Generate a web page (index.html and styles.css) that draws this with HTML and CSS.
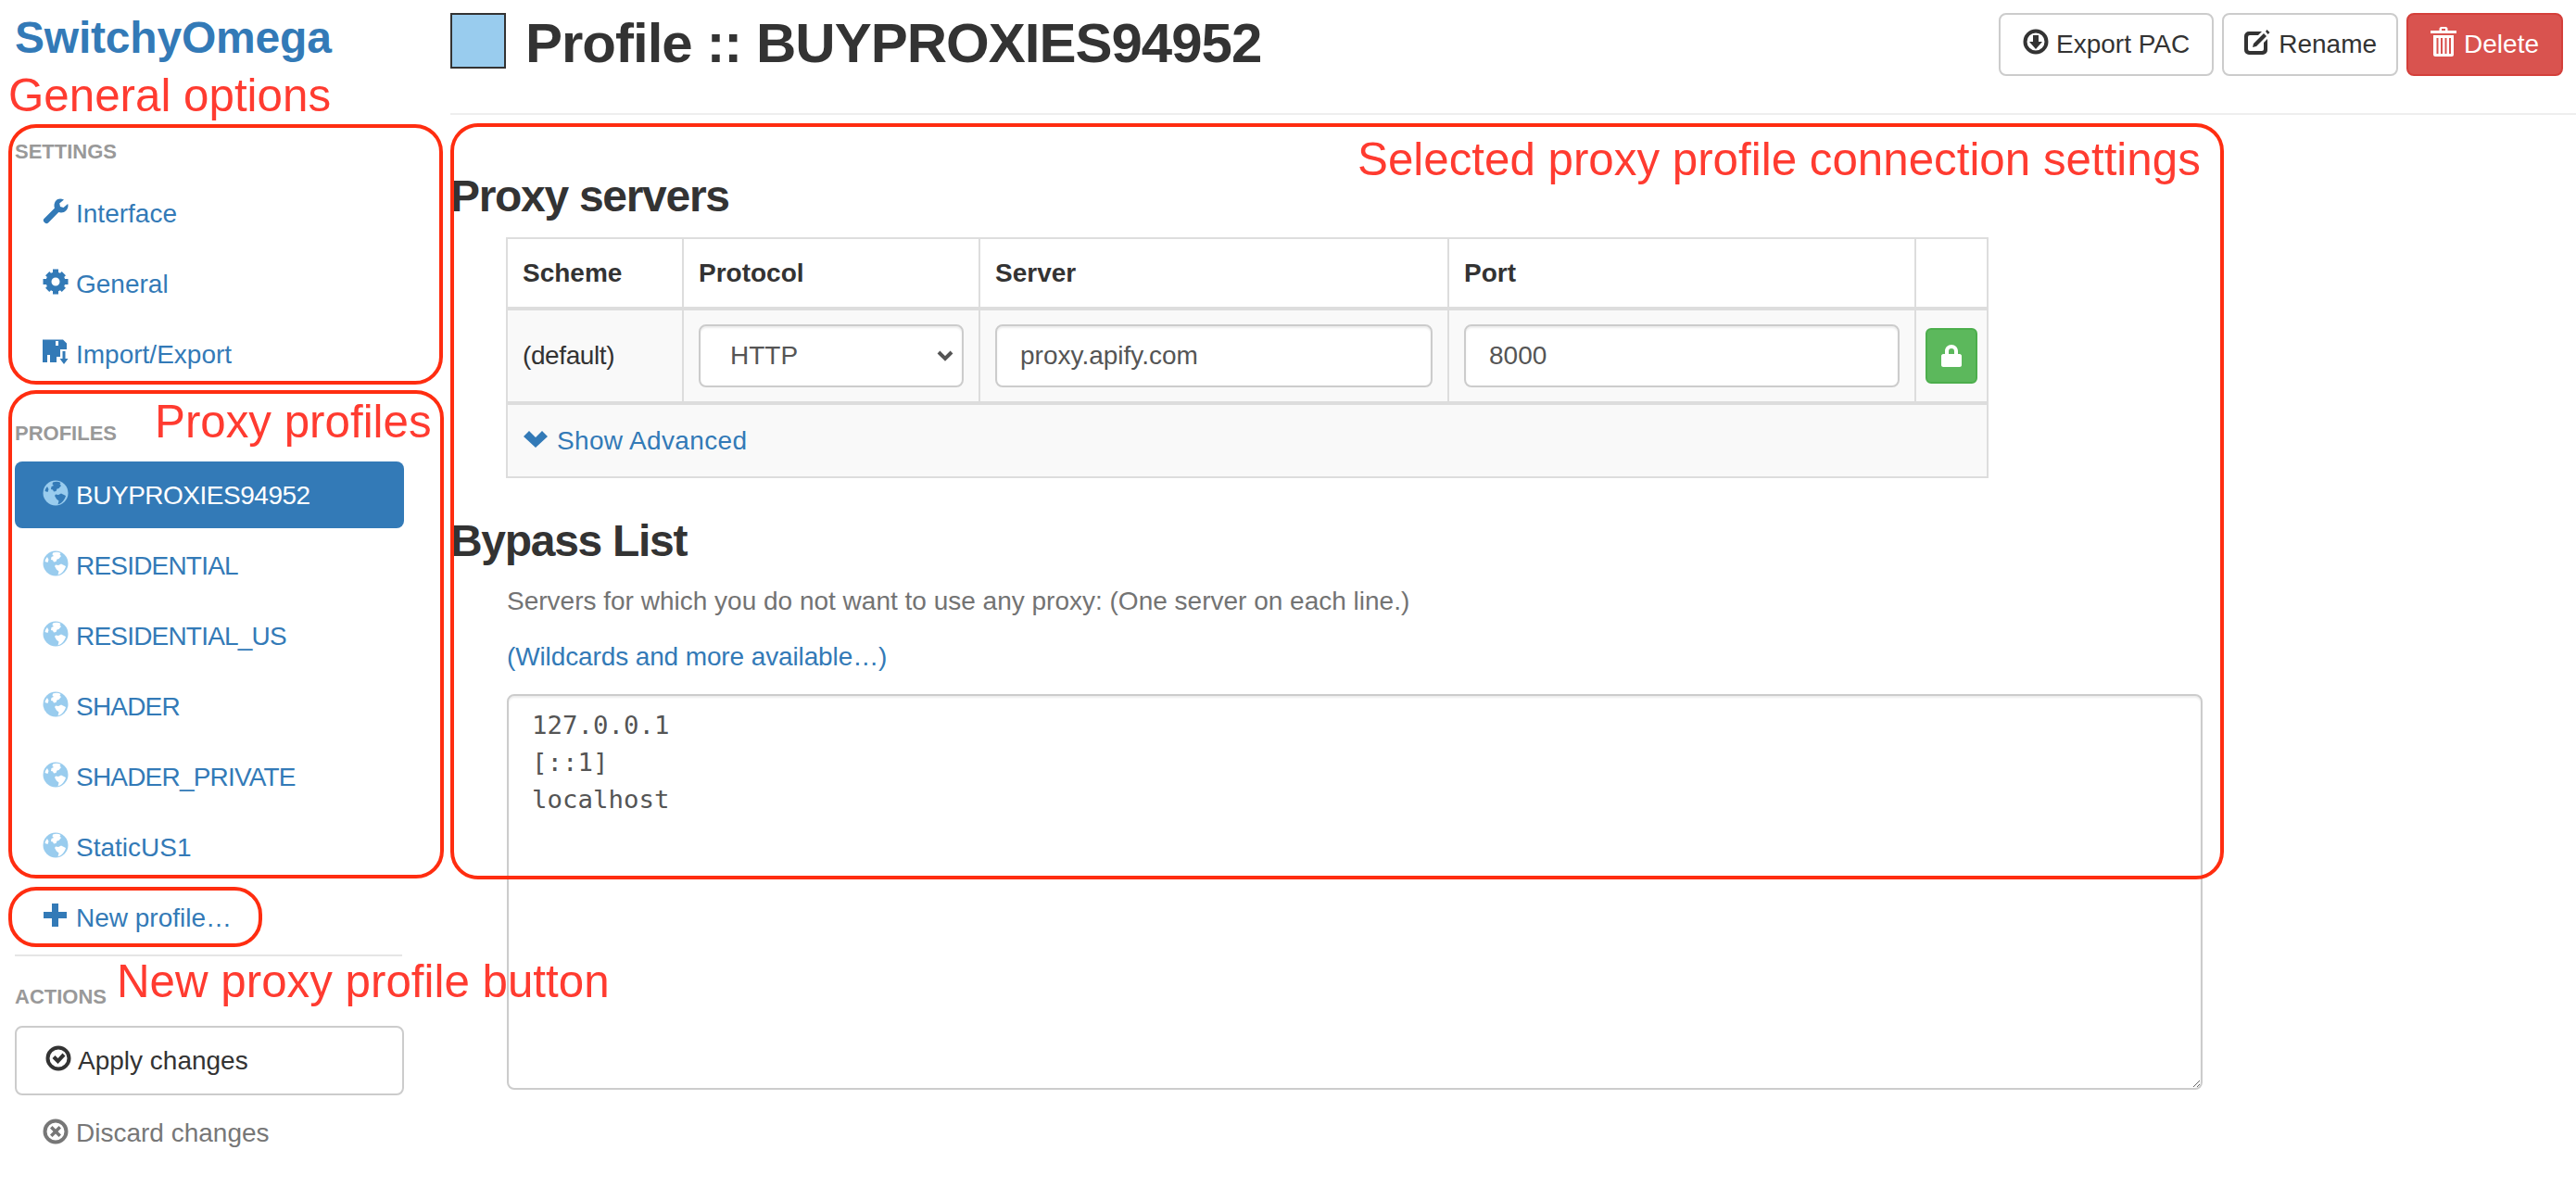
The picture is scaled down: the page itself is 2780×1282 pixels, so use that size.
FILE: index.html
```html
<!DOCTYPE html>
<html lang="en">
<head>
    <meta charset="UTF-8">
    <title>SwitchyOmega Options</title>
    <link rel="stylesheet" href="styles.css">
</head>
<body>
    <svg class="sprite" xmlns="http://www.w3.org/2000/svg">
        <symbol id="i-wrench" viewBox="0 0 28 28"><path d="M19 0.5C15 0.5 12.5 4 12.5 8c0 1 .2 2 .5 2.6L1.5 22c-1 1-1 2.5 0 3.5l1 1c1 1 2.5 1 3.5 0L17.3 15c.8.3 1.7.5 2.7.5 4 0 7.5-3.5 7.5-7.5 0-.8-.1-1.5-.3-2L22.5 10l-3.5-1-.8-3.5L23 1.500C21.500.800 20.300.500 19 .500z"/></symbol>
        <symbol id="i-cog" viewBox="0 0 28 28"><circle cx="14" cy="14" r="7.500" fill="none" stroke="currentColor" stroke-width="6"/><g fill="currentColor"><rect x="11" y="0.500" width="6" height="6"/><rect x="11" y="21.500" width="6" height="6"/><rect x="0.500" y="11" width="6" height="6"/><rect x="21.500" y="11" width="6" height="6"/><rect x="11" y="1.500" width="6" height="6" transform="rotate(45 14 14)"/><rect x="11" y="1.500" width="6" height="6" transform="rotate(135 14 14)"/><rect x="11" y="1.500" width="6" height="6" transform="rotate(225 14 14)"/><rect x="11" y="1.500" width="6" height="6" transform="rotate(315 14 14)"/></g></symbol>
        <symbol id="i-save" viewBox="0 0 28 28"><path fill-rule="evenodd" d="M0 .5h22l4 4V11h-7v8h-4v6H0zM14 2v5h3V2zM5 17v8h3v-8z"/><path d="M21.500 13h3v8h3l-4.500 6-4.500-6h3z"/></symbol>
        <symbol id="i-globe" viewBox="0 0 28 28"><circle cx="14" cy="14" r="13.500" fill="#99ccee"/><path fill="currentColor" d="M11 2.500c3-1 6-1 8.500.5l-1 1.500 1.500 1.500-2.500 3-2 .5-1 2.500-2.500.5-1-2-2-.5.5-3 2.500-1-1.500-1.500zM14 15.500l3 .5 3-1.500 5 2.500c-1 4-4 8-8.500 9.500l1-4-2.500-2-2-3.500zM5 7l1.500 3-1 3-3-1c.3-2 1.200-3.500 2.500-5z"/></symbol>
        <symbol id="i-plus" viewBox="0 0 28 28"><path d="M10 1h7v9h9v7h-9v9h-7v-9H1v-7h9z"/></symbol>
        <symbol id="i-ok" viewBox="0 0 28 28"><circle cx="14" cy="14" r="11.500" fill="none" stroke="currentColor" stroke-width="4"/><path d="M7.500 14l3-3 3 3 5-5.500 3 3-8 8.500z"/></symbol>
        <symbol id="i-remove" viewBox="0 0 28 28"><circle cx="14" cy="14" r="11.500" fill="none" stroke="currentColor" stroke-width="4"/><path d="M10.500 8L14 11.500 17.500 8 20 10.500 16.500 14 20 17.500 17.500 20 14 16.500 10.500 20 8 17.500 11.500 14 8 10.500z"/></symbol>
        <symbol id="i-download" viewBox="0 0 28 28"><circle cx="14" cy="14" r="11.500" fill="none" stroke="currentColor" stroke-width="4"/><path d="M11 7h6v7h4l-7 8-7-8h4z"/></symbol>
        <symbol id="i-edit" viewBox="0 0 30 30"><path d="M6 4h14l-4 4H7a2 2 0 0 0-2 2v13a2 2 0 0 0 2 2h13a2 2 0 0 0 2-2v-7l4-4v12a5 5 0 0 1-5 5H6a5 5 0 0 1-5-5V9a5 5 0 0 1 5-5z"/><path d="M22 6l3 3-11 11-4 1 1-4zM24 4l1.500-2 3 3-2 2z"/></symbol>
        <symbol id="i-trash" viewBox="0 0 28 32"><path fill-rule="evenodd" d="M9.500 2c0-1 1-2 2-2h5c1 0 2 1 2 2v2H28v3H0V4h9.500zM12 2v2h4V2zM3 9h22v21c0 1-1 2-2 2H5c-1 0-2-1-2-2zM6.500 12v17h2V12zM11 12v17h2V12zM15.500 12v17h2V12zM20 12v17h2V12z"/></symbol>
        <symbol id="i-lock" viewBox="0 0 22 24"><path fill-rule="evenodd" d="M4 10V7c0-4 3-7 7-7s7 3 7 7v3h2c1 0 2 1 2 2v10c0 1-1 2-2 2H2c-1 0-2-1-2-2V12c0-1 1-2 2-2zM8 10h6V7c0-2-1-3-3-3S8 5 8 7z"/></symbol>
        <symbol id="i-chevron" viewBox="0 0 26 18"><path d="M0 6l6-6 7 7 7-7 6 6-13 12z"/></symbol>
    </svg>

    <div class="page">
        <aside class="sidebar">
            <h1 class="logo">SwitchyOmega</h1>

            <div class="nav-header">SETTINGS</div>
            <ul class="nav">
                <li><a href="#"><svg class="icon"><use href="#i-wrench"/></svg>Interface</a></li>
                <li><a href="#"><svg class="icon"><use href="#i-cog"/></svg>General</a></li>
                <li><a href="#"><svg class="icon"><use href="#i-save"/></svg>Import/Export</a></li>
            </ul>

            <div class="nav-header nav-header-next">PROFILES</div>
            <ul class="nav">
                <li class="active"><a href="#"><svg class="icon icon-globe"><use href="#i-globe"/></svg><span class="caps">BUYPROXIES94952</span></a></li>
                <li><a href="#"><svg class="icon icon-globe"><use href="#i-globe"/></svg><span class="caps">RESIDENTIAL</span></a></li>
                <li><a href="#"><svg class="icon icon-globe"><use href="#i-globe"/></svg><span class="caps">RESIDENTIAL_US</span></a></li>
                <li><a href="#"><svg class="icon icon-globe"><use href="#i-globe"/></svg><span class="caps">SHADER</span></a></li>
                <li><a href="#"><svg class="icon icon-globe"><use href="#i-globe"/></svg><span class="caps">SHADER_PRIVATE</span></a></li>
                <li><a href="#"><svg class="icon icon-globe"><use href="#i-globe"/></svg>StaticUS1</a></li>
                <li><a href="#"><svg class="icon"><use href="#i-plus"/></svg>New profile…</a></li>
            </ul>

            <div class="nav-divider"></div>

            <div class="nav-header nav-header-actions">ACTIONS</div>
            <button class="apply-btn" type="button"><svg class="icon"><use href="#i-ok"/></svg>Apply changes</button>
            <a class="discard-link" href="#"><svg class="icon"><use href="#i-remove"/></svg>Discard changes</a>
        </aside>

        <main class="main">
            <header class="page-header">
                <div class="profile-swatch"></div>
                <h2 class="page-title">Profile :: BUYPROXIES94952</h2>
                <div class="page-actions">
                    <button class="btn" type="button"><svg class="icon"><use href="#i-download"/></svg>Export PAC</button>
                    <button class="btn btn-rename" type="button"><svg class="icon icon-edit"><use href="#i-edit"/></svg>Rename</button>
                    <button class="btn btn-danger" type="button"><svg class="icon icon-trash"><use href="#i-trash"/></svg>Delete</button>
                </div>
            </header>

            <section class="proxy-section">
                <h3>Proxy servers</h3>
                <table class="proxy-table">
                    <colgroup>
                        <col class="col-scheme">
                        <col class="col-protocol">
                        <col class="col-server">
                        <col class="col-port">
                        <col class="col-auth">
                    </colgroup>
                    <thead>
                        <tr>
                            <th>Scheme</th>
                            <th>Protocol</th>
                            <th>Server</th>
                            <th>Port</th>
                            <th></th>
                        </tr>
                    </thead>
                    <tbody>
                        <tr class="server-row">
                            <td class="scheme-cell">(default)</td>
                            <td><select class="field field-select"><option>HTTP</option></select></td>
                            <td><input class="field" type="text" value="proxy.apify.com"></td>
                            <td><input class="field" type="text" value="8000"></td>
                            <td class="auth-cell"><button class="lock-btn" type="button"><svg class="icon-lock"><use href="#i-lock"/></svg></button></td>
                        </tr>
                        <tr class="advanced-row">
                            <td colspan="5"><a href="#"><svg class="icon-chevron"><use href="#i-chevron"/></svg>Show Advanced</a></td>
                        </tr>
                    </tbody>
                </table>
            </section>

            <section class="bypass-section">
                <h3>Bypass List</h3>
                <p class="help-text">Servers for which you do not want to use any proxy: (One server on each line.)</p>
                <p class="help-link"><a href="#">(Wildcards and more available…)</a></p>
                <textarea class="bypass-list" spellcheck="false">127.0.0.1
[::1]
localhost</textarea>
            </section>
        </main>
    </div>

    <!-- red callouts drawn on top of the screenshot -->
    <div class="callout-box box-general"></div>
    <div class="callout-box box-profiles"></div>
    <div class="callout-box box-new"></div>
    <div class="callout-box box-selected"></div>
    <span class="callout-label label-general">General options</span>
    <span class="callout-label label-profiles">Proxy profiles</span>
    <span class="callout-label label-new">New proxy profile button</span>
    <span class="callout-label label-selected">Selected proxy profile connection settings</span>
</body>
</html>
```

FILE: styles.css
```css
:root {
    --link: #337ab7;
    --text: #333333;
    --muted: #777777;
    --border: #dddddd;
    --input-border: #cccccc;
    --stripe: #f9f9f9;
    --callout: #ff2d10;
}

* {
    margin: 0;
    padding: 0;
    box-sizing: border-box;
}

html, body {
    height: 1282px;
    overflow: hidden;
}

body {
    position: relative;
    background-color: #ffffff;
    color: var(--text);
    font-family: "Liberation Sans", Arial, sans-serif;
    font-size: 28px;
    line-height: 40px;
}

a {
    color: var(--link);
    text-decoration: none;
}

.sprite {
    display: none;
}

.icon {
    width: 28px;
    height: 28px;
    fill: currentColor;
    flex: none;
    margin-top: -6px;
}

.page {
    display: flex;
}

/* sidebar */
.sidebar {
    width: 486px;
    flex: none;
    padding-left: 16px;
    padding-right: 50px;
}

.logo {
    margin-top: 17px;
    margin-bottom: 83px;
    font-size: 48px;
    line-height: 48px;
    font-weight: 700;
    color: var(--link);
    letter-spacing: -0.2px;
}

.nav-header {
    height: 32px;
    margin-bottom: 14px;
    font-size: 22px;
    line-height: 32px;
    font-weight: 700;
    color: #999999;
}

.nav-header-next {
    margin-top: 34px;
}

.nav-header-actions {
    margin-top: 28px;
    margin-bottom: 15px;
}

.nav {
    list-style: none;
    display: flex;
    flex-direction: column;
    gap: 4px;
}

.nav a {
    display: flex;
    align-items: center;
    gap: 8px;
    height: 72px;
    padding-top: 2px;
    padding-left: 30px;
    border-radius: 8px;
}

.caps {
    letter-spacing: -0.8px;
}

.nav .active a {
    background-color: var(--link);
    color: #ffffff;
}

.nav .active .caps {
    letter-spacing: -0.48px;
}

.icon-globe {
    color: #ffffff;
}

.nav .active .icon-globe {
    color: var(--link);
}

.nav-divider {
    height: 2px;
    margin-top: 4px;
    margin-right: 2px;
    background-color: #e5e5e5;
}

.apply-btn {
    display: flex;
    align-items: center;
    gap: 7px;
    width: 100%;
    height: 75px;
    padding-left: 31px;
    background-color: #ffffff;
    border: 2px solid var(--input-border);
    border-radius: 8px;
    color: var(--text);
    font: inherit;
}

.discard-link {
    display: flex;
    align-items: center;
    gap: 8px;
    height: 72px;
    margin-top: 5px;
    padding-left: 30px;
    color: var(--muted);
}

.discard-link .icon {
    margin-top: -4px;
}

/* main column */
.main {
    flex: 1;
    min-width: 0;
}

.page-header {
    display: flex;
    align-items: flex-start;
    height: 124px;
    border-bottom: 2px solid #eeeeee;
}

.profile-swatch {
    width: 60px;
    height: 60px;
    margin-top: 14px;
    margin-right: 21px;
    background-color: #99ccee;
    border: 2px solid #333333;
}

.page-title {
    margin-top: 17px;
    font-size: 60px;
    line-height: 60px;
    font-weight: 700;
    letter-spacing: -1px;
    color: var(--text);
}

.page-actions {
    display: flex;
    gap: 9px;
    margin-top: 14px;
    margin-left: auto;
    margin-right: 14px;
}

.btn {
    display: flex;
    align-items: center;
    justify-content: center;
    gap: 8px;
    height: 68px;
    padding: 0 24px;
    background-color: #ffffff;
    border: 2px solid var(--input-border);
    border-radius: 8px;
    color: var(--text);
    font: inherit;
}

.btn-rename {
    padding: 0 21px;
}

.btn-danger {
    background-color: #d9534f;
    border-color: #d43f3a;
    color: #ffffff;
}

.icon-edit {
    width: 30px;
    height: 30px;
}

.icon-trash {
    height: 32px;
}

h3 {
    font-size: 48px;
    line-height: 56px;
    font-weight: 700;
    letter-spacing: -1.3px;
    color: var(--text);
}

.proxy-section {
    margin-top: 60px;
}

.proxy-section h3 {
    margin-bottom: 16px;
}

.proxy-table {
    width: 1598px;
    margin-left: 60px;
    table-layout: fixed;
    border-collapse: collapse;
}

.col-scheme { width: 190px; }
.col-protocol { width: 320px; }
.col-server { width: 506px; }
.col-port { width: 504px; }
.col-auth { width: 78px; }

.proxy-table th,
.proxy-table td {
    padding: 0 16px;
    border: 2px solid var(--border);
    text-align: left;
    vertical-align: middle;
}

.proxy-table th {
    height: 76px;
    border-bottom-width: 4px;
}

.server-row td {
    height: 102px;
    background-color: var(--stripe);
    border-bottom-width: 4px;
}

.server-row .scheme-cell {
    letter-spacing: -0.4px;
}

.server-row .auth-cell {
    padding: 0 10px;
}

.advanced-row td {
    height: 80px;
    background-color: var(--stripe);
}

.advanced-row a {
    display: flex;
    align-items: center;
    gap: 10px;
    letter-spacing: 0.35px;
}

.icon-chevron {
    width: 26px;
    height: 18px;
    fill: currentColor;
    margin-top: -4px;
    margin-left: 1px;
}

.field {
    display: block;
    width: 100%;
    height: 68px;
    padding: 0 25px;
    background-color: #ffffff;
    border: 2px solid var(--input-border);
    border-radius: 8px;
    box-shadow: inset 0 2px 2px rgba(0, 0, 0, 0.075);
    color: #555555;
    font: inherit;
}

.field-select {
    padding-left: 32px;
    appearance: none;
    background-image: url("data:image/svg+xml,%3Csvg xmlns='http://www.w3.org/2000/svg' viewBox='0 0 18 12'%3E%3Cpath d='M2 2l7 7 7-7' fill='none' stroke='%23555' stroke-width='4'/%3E%3C/svg%3E");
    background-repeat: no-repeat;
    background-size: 18px 12px;
    background-position: right 9px center;
}

.lock-btn {
    display: flex;
    align-items: center;
    justify-content: center;
    width: 56px;
    height: 60px;
    background-color: #5cb85c;
    border: 2px solid #4cae4c;
    border-radius: 6px;
}

.icon-lock {
    width: 22px;
    height: 24px;
    fill: #ffffff;
}

.bypass-section {
    margin-top: 40px;
}

.bypass-section > p,
.bypass-list {
    margin-left: 61px;
}

.help-text {
    margin-top: 17px;
    color: #737373;
}

.help-link {
    margin-top: 20px;
    letter-spacing: -0.12px;
}

.bypass-list {
    display: block;
    width: 1830px;
    height: 427px;
    margin-top: 20px;
    padding: 12px 25px;
    border: 2px solid var(--input-border);
    border-radius: 8px;
    box-shadow: inset 0 2px 2px rgba(0, 0, 0, 0.075);
    color: #555555;
    font-family: "DejaVu Sans Mono", "Liberation Mono", monospace;
    font-size: 27.400px;
    line-height: 40px;
    outline: none;
}

/* callouts */
.callout-box {
    position: absolute;
    border: 4px solid var(--callout);
    border-radius: 30px;
    pointer-events: none;
}

.box-general { left: 9px; top: 134px; width: 469px; height: 281px; }
.box-profiles { left: 9px; top: 421px; width: 470px; height: 527px; }
.box-new { left: 9px; top: 957px; width: 274px; height: 65px; }
.box-selected { left: 486px; top: 133px; width: 1914px; height: 816px; }

.callout-label {
    position: absolute;
    font-size: 49.300px;
    line-height: 49px;
    color: #ff3b30;
    white-space: nowrap;
}

.label-general { left: 9px; top: 78px; }
.label-profiles { left: 167px; top: 430px; }
.label-new { left: 126px; top: 1034px; }
.label-selected { left: 1465px; top: 147px; }
```
